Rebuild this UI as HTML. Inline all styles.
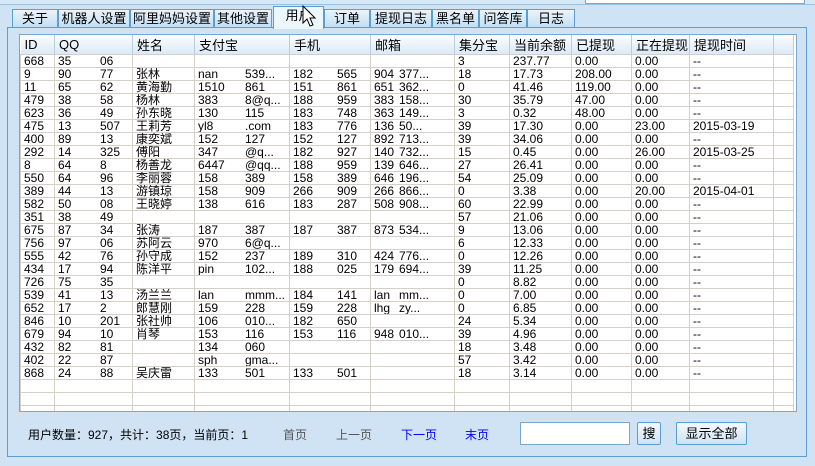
<!DOCTYPE html>
<html><head><meta charset="utf-8"><style>
*{margin:0;padding:0;box-sizing:border-box}
body{width:815px;height:466px;background:#cfe3f4;font-family:"Liberation Sans","Noto Sans CJK SC",sans-serif;font-size:12px;position:relative;overflow:hidden;color:#000}
.top{position:absolute;left:0;top:0;width:815px;height:5px;border-bottom:1px solid #9cc0e0;background:#d6e8f6}
.tab{position:absolute;top:9px;height:19px;border:1px solid #5a9fd4;background:linear-gradient(#eaf4fc,#c5def2);font-size:13px;line-height:17px;text-align:center}
.tab.sel{top:6px;height:23px;background:#eef6fd;z-index:3;border-bottom:none}
.panel{position:absolute;left:7px;top:27px;width:800px;height:430px;border:1px solid #5a9fd4;background:#cfe3f4}
.grid{position:absolute;left:19px;top:34px;width:778px;height:378px;border:1px solid #7ba7cc;background:#fff;overflow:hidden}
table{border-collapse:collapse;table-layout:fixed;width:773px}
td{height:13px;line-height:12px;border:1px solid #d4d0c8;border-top:none;padding-left:3px;white-space:nowrap;overflow:hidden;font-size:12px}
th{height:18px;font-weight:normal;text-align:left;padding-left:4px;font-size:13px;background:linear-gradient(#fbfdff,#dbe9f6);border-right:1px solid #b8cde0;border-bottom:1px solid #d4d0c8}
i{font-style:normal;display:inline-block}
.q i{width:42px}.a i{width:47px}.p i{width:44px}.e i{width:25px}
.foot{position:absolute;top:426px;font-size:12px}
.btn{position:absolute;top:422px;height:23px;border:1px solid #5a9fd4;border-radius:2px;background:linear-gradient(#f4f9fe,#cfe2f3);text-align:center;line-height:21px;font-size:13px}
</style></head><body>
<div class="top"></div>
<div style="position:absolute;right:10px;top:0;width:220px;height:4px;border:1px solid #7ba7cc;border-top:none;background:#fff"></div>
<div class="panel"></div>
<div class="tab" style="left:12px;width:46px">关于</div>
<div class="tab" style="left:58px;width:72px">机器人设置</div>
<div class="tab" style="left:130px;width:84px">阿里妈妈设置</div>
<div class="tab" style="left:214px;width:58px">其他设置</div>
<div class="tab sel" style="left:273px;width:51px">用户</div>
<div class="tab" style="left:324px;width:46px">订单</div>
<div class="tab" style="left:370px;width:62px">提现日志</div>
<div class="tab" style="left:432px;width:47px">黑名单</div>
<div class="tab" style="left:479px;width:48px">问答库</div>
<div class="tab" style="left:527px;width:48px">日志</div>
<svg style="position:absolute;left:302px;top:5px;z-index:5" width="16" height="24"><path d="M1 1 L1 18 L5 14 L8 21 L11 20 L8 13 L13 13 Z" fill="#fff" stroke="#000"/></svg>
<div class="grid"><table>
<colgroup><col style="width:34px"><col style="width:78px"><col style="width:62px"><col style="width:95px"><col style="width:81px"><col style="width:84px"><col style="width:55px"><col style="width:62px"><col style="width:60px"><col style="width:58px"><col style="width:84px"><col style="width:20px"></colgroup>
<tr><th>ID</th><th>QQ</th><th>姓名</th><th>支付宝</th><th>手机</th><th>邮箱</th><th>集分宝</th><th>当前余额</th><th>已提现</th><th>正在提现</th><th>提现时间</th><th></th></tr>
<tr><td>668</td><td class="q"><i>35</i>06</td><td></td><td></td><td></td><td></td><td>3</td><td>237.77</td><td>0.00</td><td>0.00</td><td>--</td><td></td></tr>
<tr><td>9</td><td class="q"><i>90</i>77</td><td>张林</td><td class="a"><i>nan</i>539...</td><td class="p"><i>182</i>565</td><td class="e"><i>904</i>377...</td><td>18</td><td>17.73</td><td>208.00</td><td>0.00</td><td>--</td><td></td></tr>
<tr><td>11</td><td class="q"><i>65</i>62</td><td>黄海勤</td><td class="a"><i>1510</i>861</td><td class="p"><i>151</i>861</td><td class="e"><i>651</i>362...</td><td>0</td><td>41.46</td><td>119.00</td><td>0.00</td><td>--</td><td></td></tr>
<tr><td>479</td><td class="q"><i>38</i>58</td><td>杨林</td><td class="a"><i>383</i>8@q...</td><td class="p"><i>188</i>959</td><td class="e"><i>383</i>158...</td><td>30</td><td>35.79</td><td>47.00</td><td>0.00</td><td>--</td><td></td></tr>
<tr><td>623</td><td class="q"><i>36</i>49</td><td>孙东晓</td><td class="a"><i>130</i>115</td><td class="p"><i>183</i>748</td><td class="e"><i>363</i>149...</td><td>3</td><td>0.32</td><td>48.00</td><td>0.00</td><td>--</td><td></td></tr>
<tr><td>475</td><td class="q"><i>13</i>507</td><td>王莉芳</td><td class="a"><i>yl8</i>.com</td><td class="p"><i>183</i>776</td><td class="e"><i>136</i>50...</td><td>39</td><td>17.30</td><td>0.00</td><td>23.00</td><td>2015-03-19</td><td></td></tr>
<tr><td>400</td><td class="q"><i>89</i>13</td><td>康奕斌</td><td class="a"><i>152</i>127</td><td class="p"><i>152</i>127</td><td class="e"><i>892</i>713...</td><td>39</td><td>34.06</td><td>0.00</td><td>0.00</td><td>--</td><td></td></tr>
<tr><td>292</td><td class="q"><i>14</i>325</td><td>傅阳</td><td class="a"><i>347</i>@q...</td><td class="p"><i>182</i>927</td><td class="e"><i>140</i>732...</td><td>15</td><td>0.45</td><td>0.00</td><td>26.00</td><td>2015-03-25</td><td></td></tr>
<tr><td>8</td><td class="q"><i>64</i>8</td><td>杨善龙</td><td class="a"><i>6447</i>@qq...</td><td class="p"><i>188</i>959</td><td class="e"><i>139</i>646...</td><td>27</td><td>26.41</td><td>0.00</td><td>0.00</td><td>--</td><td></td></tr>
<tr><td>550</td><td class="q"><i>64</i>96</td><td>李丽蓉</td><td class="a"><i>158</i>389</td><td class="p"><i>158</i>389</td><td class="e"><i>646</i>196...</td><td>54</td><td>25.09</td><td>0.00</td><td>0.00</td><td>--</td><td></td></tr>
<tr><td>389</td><td class="q"><i>44</i>13</td><td>游镇琼</td><td class="a"><i>158</i>909</td><td class="p"><i>266</i>909</td><td class="e"><i>266</i>866...</td><td>0</td><td>3.38</td><td>0.00</td><td>20.00</td><td>2015-04-01</td><td></td></tr>
<tr><td>582</td><td class="q"><i>50</i>08</td><td>王晓婷</td><td class="a"><i>138</i>616</td><td class="p"><i>183</i>287</td><td class="e"><i>508</i>908...</td><td>60</td><td>22.99</td><td>0.00</td><td>0.00</td><td>--</td><td></td></tr>
<tr><td>351</td><td class="q"><i>38</i>49</td><td></td><td></td><td></td><td></td><td>57</td><td>21.06</td><td>0.00</td><td>0.00</td><td>--</td><td></td></tr>
<tr><td>675</td><td class="q"><i>87</i>34</td><td>张涛</td><td class="a"><i>187</i>387</td><td class="p"><i>187</i>387</td><td class="e"><i>873</i>534...</td><td>9</td><td>13.06</td><td>0.00</td><td>0.00</td><td>--</td><td></td></tr>
<tr><td>756</td><td class="q"><i>97</i>06</td><td>苏阿云</td><td class="a"><i>970</i>6@q...</td><td></td><td></td><td>6</td><td>12.33</td><td>0.00</td><td>0.00</td><td>--</td><td></td></tr>
<tr><td>555</td><td class="q"><i>42</i>76</td><td>孙守成</td><td class="a"><i>152</i>237</td><td class="p"><i>189</i>310</td><td class="e"><i>424</i>776...</td><td>0</td><td>12.26</td><td>0.00</td><td>0.00</td><td>--</td><td></td></tr>
<tr><td>434</td><td class="q"><i>17</i>94</td><td>陈洋平</td><td class="a"><i>pin</i>102...</td><td class="p"><i>188</i>025</td><td class="e"><i>179</i>694...</td><td>39</td><td>11.25</td><td>0.00</td><td>0.00</td><td>--</td><td></td></tr>
<tr><td>726</td><td class="q"><i>75</i>35</td><td></td><td></td><td></td><td></td><td>0</td><td>8.82</td><td>0.00</td><td>0.00</td><td>--</td><td></td></tr>
<tr><td>539</td><td class="q"><i>41</i>13</td><td>汤兰兰</td><td class="a"><i>lan</i>mmm...</td><td class="p"><i>184</i>141</td><td class="e"><i>lan</i>mm...</td><td>0</td><td>7.00</td><td>0.00</td><td>0.00</td><td>--</td><td></td></tr>
<tr><td>652</td><td class="q"><i>17</i>2</td><td>郎慧刚</td><td class="a"><i>159</i>228</td><td class="p"><i>159</i>228</td><td class="e"><i>lhg</i>zy...</td><td>0</td><td>6.85</td><td>0.00</td><td>0.00</td><td>--</td><td></td></tr>
<tr><td>846</td><td class="q"><i>10</i>201</td><td>张社帅</td><td class="a"><i>106</i>010...</td><td class="p"><i>182</i>650</td><td></td><td>24</td><td>5.34</td><td>0.00</td><td>0.00</td><td>--</td><td></td></tr>
<tr><td>679</td><td class="q"><i>94</i>10</td><td>肖琴</td><td class="a"><i>153</i>116</td><td class="p"><i>153</i>116</td><td class="e"><i>948</i>010...</td><td>39</td><td>4.96</td><td>0.00</td><td>0.00</td><td>--</td><td></td></tr>
<tr><td>432</td><td class="q"><i>82</i>81</td><td></td><td class="a"><i>134</i>060</td><td></td><td></td><td>18</td><td>3.48</td><td>0.00</td><td>0.00</td><td>--</td><td></td></tr>
<tr><td>402</td><td class="q"><i>22</i>87</td><td></td><td class="a"><i>sph</i>gma...</td><td></td><td></td><td>57</td><td>3.42</td><td>0.00</td><td>0.00</td><td>--</td><td></td></tr>
<tr><td>868</td><td class="q"><i>24</i>88</td><td>吴庆雷</td><td class="a"><i>133</i>501</td><td class="p"><i>133</i>501</td><td></td><td>18</td><td>3.14</td><td>0.00</td><td>0.00</td><td>--</td><td></td></tr>
<tr><td></td><td></td><td></td><td></td><td></td><td></td><td></td><td></td><td></td><td></td><td></td><td></td></tr>
<tr><td></td><td></td><td></td><td></td><td></td><td></td><td></td><td></td><td></td><td></td><td></td><td></td></tr>
<tr><td></td><td></td><td></td><td></td><td></td><td></td><td></td><td></td><td></td><td></td><td></td><td></td></tr>
</table>
</div>
<div class="foot" style="left:28px">用户数量：927，共计：38页，当前页：1</div>
<div class="foot" style="left:283px;color:#555">首页</div>
<div class="foot" style="left:336px;color:#555">上一页</div>
<div class="foot" style="left:401px;color:#00f">下一页</div>
<div class="foot" style="left:465px;color:#00f">末页</div>
<div style="position:absolute;left:520px;top:422px;width:110px;height:23px;border:1px solid #7ba7cc;background:#fff"></div>
<div class="btn" style="left:637px;width:24px">搜</div>
<div class="btn" style="left:676px;width:71px">显示全部</div>
</body></html>
